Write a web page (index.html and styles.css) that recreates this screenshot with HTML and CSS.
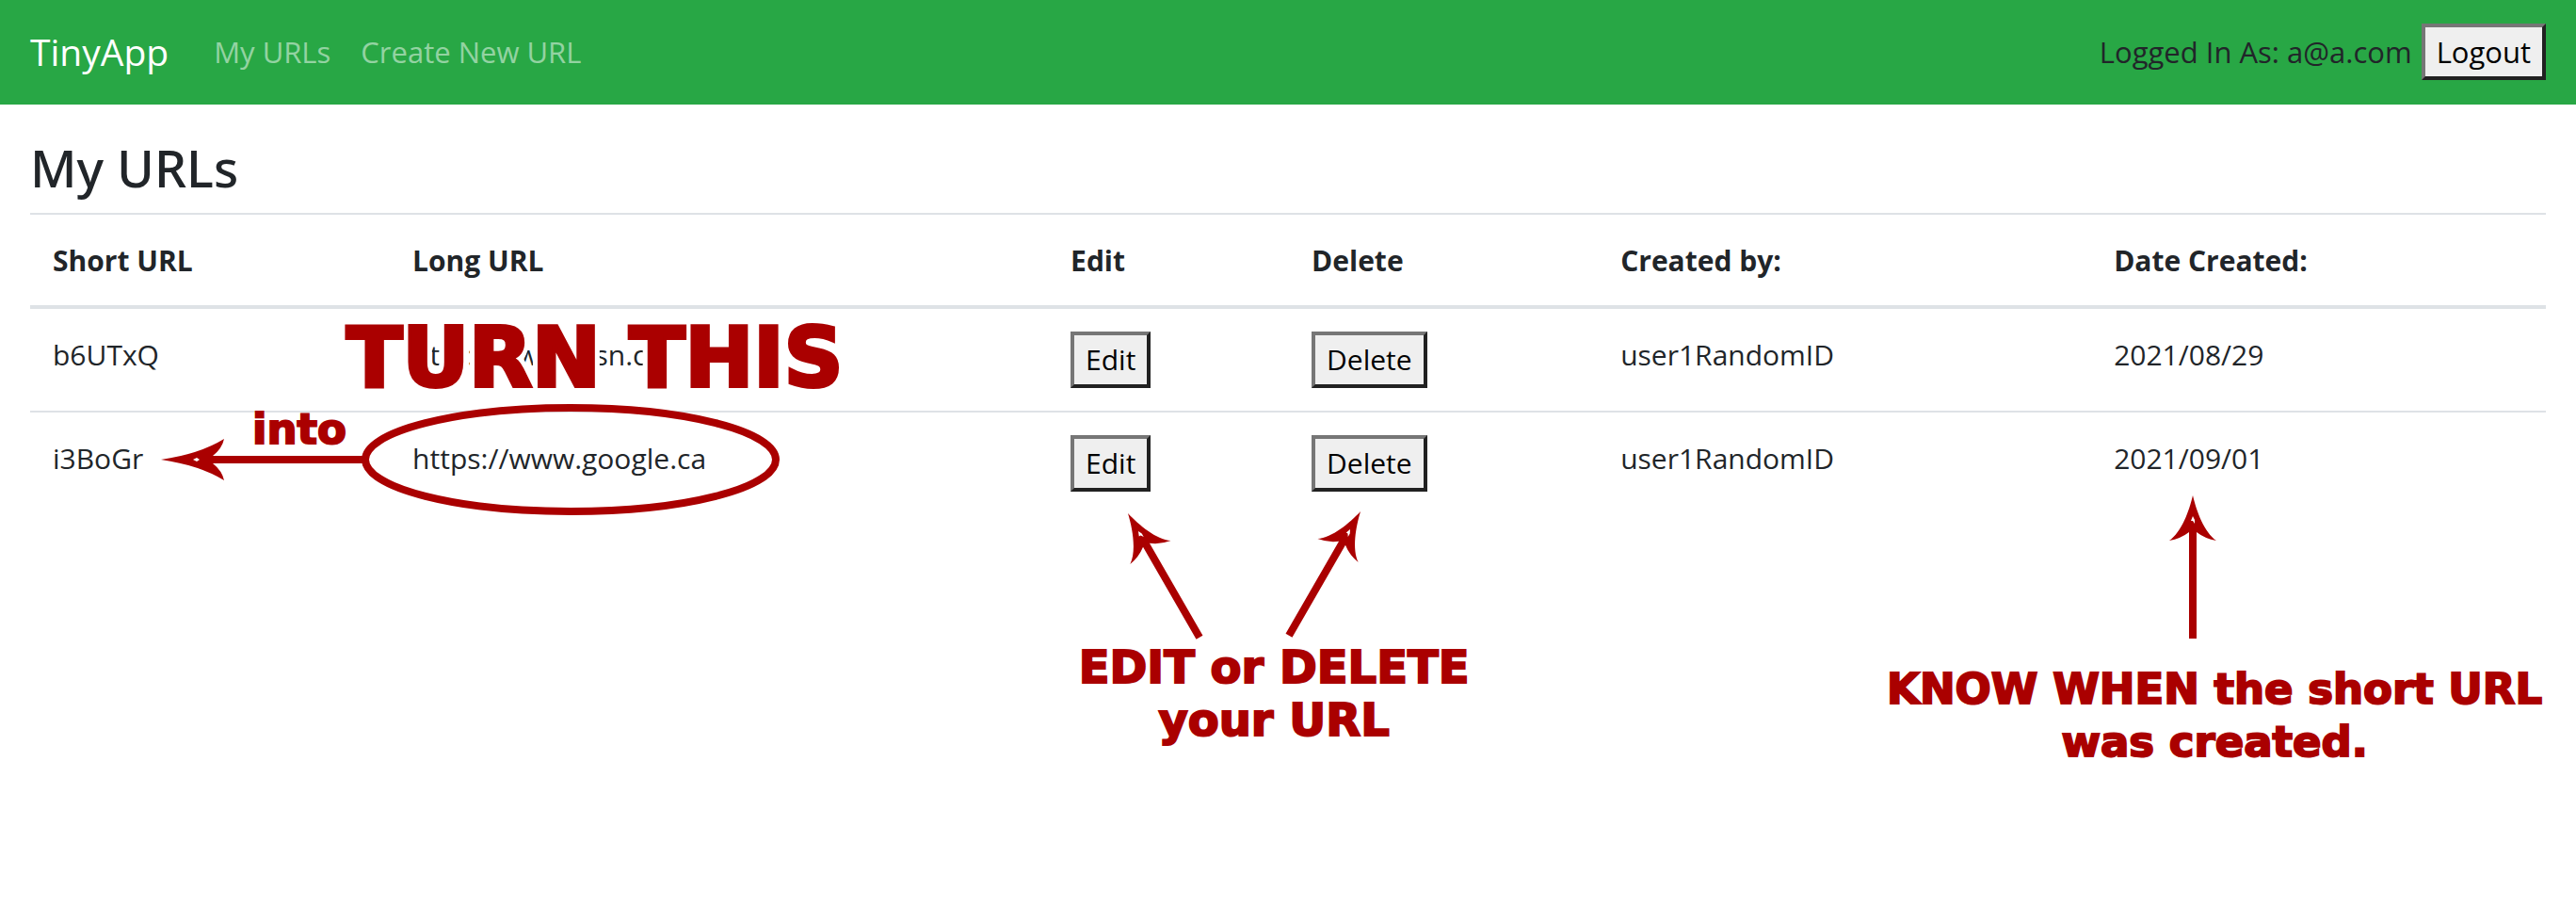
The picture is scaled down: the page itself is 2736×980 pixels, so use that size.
FILE: index.html
```html
<!DOCTYPE html>
<html lang="en">
<head>
<meta charset="utf-8">
<title>TinyApp</title>
<link rel="stylesheet" href="styles.css">
</head>
<body>
<svg class="defs" aria-hidden="true">
  <symbol id="arrow" viewBox="-30 0 60 156" overflow="visible">
    <path fill-rule="evenodd" d="M0 0C4 17 12 39 25 48Q13 46 4 39V152H-4V39Q-13 46 -25 48C-12 39 -4 17 0 0ZM0 22L-2 27L0 27L2 30L2 26Z"/>
  </symbol>
</svg>
<header class="navbar">
  <a class="brand" href="#">TinyApp</a>
  <nav class="links">
    <a href="#">My URLs</a>
    <a href="#">Create New URL</a>
  </nav>
  <form class="session">
    <span>Logged In As: a@a.com</span>
    <button type="button">Logout</button>
  </form>
</header>
<main>
  <h1>My URLs</h1>
  <table>
    <colgroup>
      <col class="c-short"><col class="c-long"><col class="c-edit"><col class="c-delete"><col class="c-user"><col class="c-date">
    </colgroup>
    <thead>
      <tr><th>Short URL</th><th>Long URL</th><th>Edit</th><th>Delete</th><th>Created by:</th><th>Date Created:</th></tr>
    </thead>
    <tbody>
      <tr>
        <td>b6UTxQ</td>
        <td>http://www.msn.ca<strong class="note note-turn">TURN THIS</strong></td>
        <td><button type="button">Edit</button></td>
        <td><button type="button">Delete</button></td>
        <td>user1RandomID</td>
        <td>2021/08/29</td>
      </tr>
      <tr>
        <td>i3BoGr</td>
        <td>https://www.google.ca
          <svg class="mark mark-ring" viewBox="0 0 660 120" aria-hidden="true">
            <path fill-rule="evenodd" d="M1 60Q42 54 68 38Q66 48 56 56H218V64H56Q66 72 68 82Q42 66 1 60ZM35 60L39 62L42 60L39 58Z"/>
            <ellipse cx="436" cy="60" rx="218" ry="55"/>
          </svg>
          <strong class="note note-into">into</strong>
        </td>
        <td><button type="button">Edit</button>
          <svg class="mark mark-actions" viewBox="0 0 280 140" aria-hidden="true">
            <use href="#arrow" x="-30" y="0" width="60" height="156" transform="translate(15 3) rotate(-30)"/>
            <use href="#arrow" x="-30" y="0" width="60" height="156" transform="translate(262 1) rotate(30)"/>
          </svg>
          <strong class="note note-actions">EDIT or DELETE<br>your URL</strong>
        </td>
        <td><button type="button">Delete</button></td>
        <td>user1RandomID</td>
        <td>2021/09/01
          <svg class="mark mark-date" viewBox="-30 0 60 156" aria-hidden="true"><use href="#arrow" x="-30" y="0" width="60" height="156"/></svg>
          <strong class="note note-date">KNOW WHEN the short URL<br>was created.</strong>
        </td>
      </tr>
    </tbody>
  </table>
</main>
</body>
</html>
```
FILE: styles.css
```css
* { box-sizing: border-box; }
body {
  margin: 0;
  min-height: 100vh;
  background: #fff;
  color: #212529;
  font: 30px/50px "Open Sans", "Noto Sans", sans-serif;
}
a { text-decoration: none; }
.defs { position: absolute; width: 0; height: 0; }
.navbar {
  display: flex;
  align-items: center;
  gap: 48px;
  padding: 25px 32px 26px;
  background: #28a745;
  font-size: 31px;
}
.brand { color: #fff; font-size: 39px; line-height: 60px; }
.links { display: flex; gap: 32px; }
.links a { color: rgba(255, 255, 255, .5); }
.session { display: flex; align-items: center; gap: 10px; margin-left: auto; }
button {
  display: block;
  padding: 1px 12px;
  border: 4px solid;
  border-color: #767676 #212121 #212121 #767676;
  border-radius: 0;
  background: #efefef;
  color: #000;
  font: inherit;
}
main { padding: 33px 32px; }
h1 { margin: 0 0 14px; font-family: "Noto Sans", "Open Sans", sans-serif; font-size: 54px; font-weight: 500; line-height: 68px; }
table { width: 100%; table-layout: fixed; border-collapse: separate; border-spacing: 0; }
.c-short { width: 14.3%; }
.c-long { width: 26.16%; }
.c-edit { width: 9.58%; }
.c-delete { width: 12.28%; }
.c-user { width: 19.61%; }
.c-date { width: 18.07%; }
th, td { position: relative; padding: 24px; text-align: left; vertical-align: top; white-space: nowrap; }
th { padding-bottom: 22px; border-top: 2px solid #dee2e6; border-bottom: 4px solid #dee2e6; font-weight: 700; }
tr + tr td { border-top: 2px solid #dee2e6; }

.mark { position: absolute; overflow: visible; fill: #a00; }
.mark ellipse { fill: none; stroke: #a00; stroke-width: 8px; }
.mark-ring { left: -244px; top: -10px; width: 660px; height: 120px; }
.mark-actions { left: 70px; top: 104px; width: 280px; height: 140px; }
.mark-date { left: 78px; top: 88px; width: 60px; height: 156px; }
.note {
  position: absolute;
  color: #a00;
  font-family: "DejaVu Sans", "Liberation Sans", sans-serif;
  font-size: 45px;
  font-weight: 700;
  line-height: 56px;
  text-align: center;
  -webkit-text-stroke: 2px #a00;
}
.note-turn {
  left: -46px;
  top: 0;
  font-size: 87px;
  line-height: 104px;
  -webkit-text-stroke: 4px #a00;
  text-shadow: 7px 0 #fff, -7px 0 #fff, 0 6px #fff, 0 -6px #fff, 5px 5px #fff, -5px 5px #fff, 5px -5px #fff, -5px -5px #fff;
}
.note-into { left: -146px; top: -10px; }
.note-actions { left: 240px; top: 242px; font-size: 48px; transform: translateX(-50%); }
.note-date { left: 131px; top: 266px; transform: translateX(-50%); }
```
